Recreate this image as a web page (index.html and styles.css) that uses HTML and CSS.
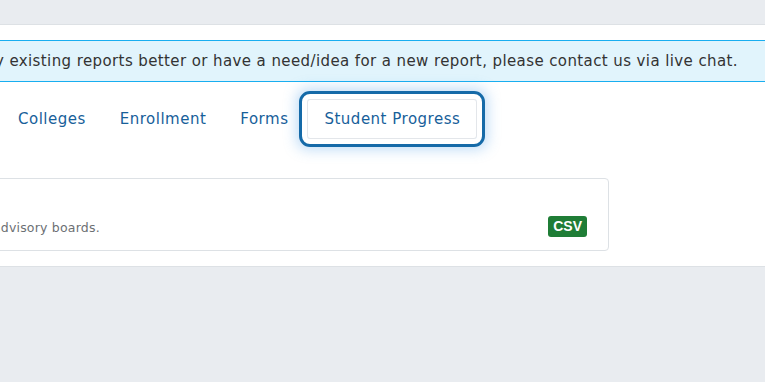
FILE: index.html
```html
<!DOCTYPE html>
<html lang="en">
<head>
  <meta charset="UTF-8" />
  <title>Reports</title>
  <link rel="stylesheet" href="styles.css">
</head>
<body>
  <div class="topbar"></div>
  <div class="panel">
    <div class="alert">
      <span>If you would like to see any existing reports better or have a need/idea for a new report, please contact us via live chat.</span>
    </div>

    <div class="tabs">
      <a href="#" class="tab">Colleges</a>
      <a href="#" class="tab">Enrollment</a>
      <a href="#" class="tab">Forms</a>
      <a href="#" class="tab active">Student Progress</a>
    </div>

    <div class="report-card">
      <div class="report-body">
        <div class="report-desc">Students who have completed program requirements, for review by advisory boards.</div>
      </div>
      <span class="badge">CSV</span>
    </div>
  </div>
</body>
</html>
```

FILE: styles.css
```css
* {
  box-sizing: border-box;
}

body {
  margin: 0;
  font-family: 'DejaVu Sans', sans-serif;
  background-color: #e9ecf0;
  overflow: hidden;
  height: 382px;
}

.topbar {
  height: 25px;
  border-bottom: 1px solid #dde1e5;
}

.panel {
  background: #fff;
  height: 242px;
  padding-top: 15px;
  border-bottom: 1px solid #dde1e5;
}

.alert {
  display: flex;
  justify-content: flex-end;
  white-space: nowrap;
  width: 800px;
  height: 42px;
  align-items: center;
  padding-right: 62px;
  background: #e1f4fc;
  border-top: 1px solid #19aef0;
  border-bottom: 1px solid #19aef0;
  color: #333;
  font-size: 15px;
  letter-spacing: 0.4px;
}

.tabs {
  display: flex;
  align-items: center;
  gap: 2px;
  padding: 11px 0 0 2px;
  height: 63px;
}

.tab {
  padding: 8px 16px;
  color: #17609a;
  text-decoration: none;
  font-size: 15px;
  letter-spacing: 0.5px;
}

.tab.active {
  padding: 10px 16px;
  border: 1px solid #e3e6ea;
  border-radius: 3px;
  outline: 3px solid #156aa8;
  outline-offset: 5px;
  box-shadow: 0 0 0 7px rgba(255,255,255,1), 0 0 14px 10px rgba(60,150,230,0.35);
  margin-left: 1px;
}

.report-card {
  display: flex;
  align-items: flex-end;
  justify-content: space-between;
  margin: 33px 0 0 -500px;
  width: 1109px;
  height: 73px;
  border: 1px solid #dde1e5;
  border-radius: 4px;
  padding: 0 21px 13px 20px;
}

.report-desc {
  font-size: 12.5px;
  color: #6c6f73;
  padding: 0 0 2px 30px;
  letter-spacing: 0.2px;
}

.badge {
  font-family: 'Liberation Sans', sans-serif;
  background: #1f7d36;
  color: #fff;
  font-weight: bold;
  font-size: 14px;
  border-radius: 3px;
  padding: 2px 5px 3px;
}
```
